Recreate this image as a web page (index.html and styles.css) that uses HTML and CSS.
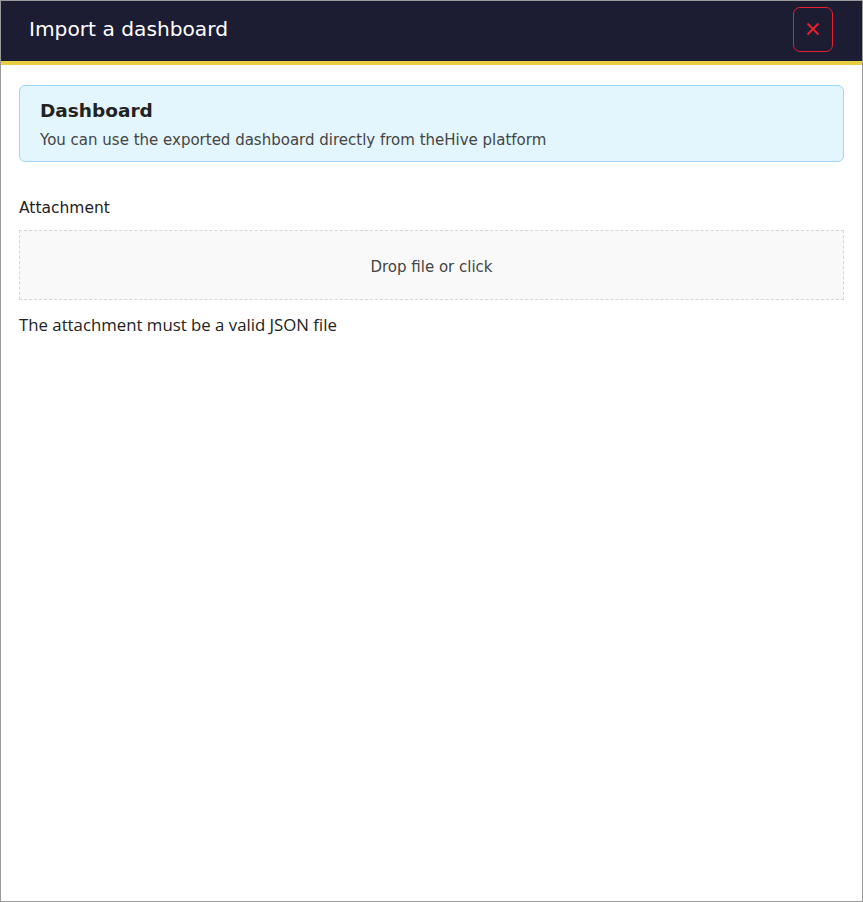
FILE: index.html
```html
<!DOCTYPE html>
<html>
<head>
<meta charset="utf-8">
<link rel="stylesheet" href="styles.css">
</head>
<body>
<div class="frame">
  <header class="header">
    <h1 class="title">Import a dashboard</h1>
    <button class="close" aria-label="Close">
      <svg width="14" height="14" viewBox="0 0 14 14"><path d="M1.5 1.5 L12.5 12.5 M12.5 1.5 L1.5 12.5" stroke="#e8202e" stroke-width="2" fill="none"/></svg>
    </button>
  </header>
  <main class="content">
    <div class="alert">
      <div class="alert-title">Dashboard</div>
      <div class="alert-text">You can use the exported dashboard directly from theHive platform</div>
    </div>
    <label class="label">Attachment</label>
    <div class="dropzone">Drop file or click</div>
    <p class="hint">The attachment must be a valid JSON file</p>
  </main>
</div>
</body>
</html>
```
FILE: styles.css
```css
* { box-sizing: border-box; }
html, body { margin: 0; padding: 0; background: #fff; }
.frame {
  width: 863px;
  height: 902px;
  border: 1px solid #9a9a9a;
  display: flex;
  flex-direction: column;
  font-family: "DejaVu Sans", sans-serif;
}
.header {
  height: 64px;
  background: #1c1c33;
  border-bottom: 4px solid #e9cf40;
  display: flex;
  align-items: center;
  justify-content: space-between;
  padding: 0 29px 0 28px;
}
.title {
  margin: 0;
  font-size: 20.2px;
  font-weight: normal;
  color: #fff;
  padding-bottom: 5px;
}
.close {
  width: 40px;
  height: 45px;
  border: 1px solid #e8202e;
  border-radius: 7px;
  background: transparent;
  display: flex;
  align-items: center;
  justify-content: center;
  padding: 0;
  margin-bottom: 4px;
}
.content {
  padding: 20px 18px;
}
.alert {
  background: #e3f5fd;
  border: 1px solid #9fd6f7;
  border-radius: 6px;
  padding: 13px 20px 12px;
  margin-bottom: 37px;
  height: 77px;
}
.alert-title {
  font-size: 18.5px;
  font-weight: bold;
  color: #222;
  line-height: 24px;
}
.alert-text {
  font-size: 15px;
  color: #444;
  margin-top: 7px;
  line-height: 20px;
}
.label {
  display: block;
  font-size: 15.5px;
  color: #222;
  line-height: 18px;
  margin-top: 1px;
  margin-bottom: 13px;
}
.dropzone {
  height: 70px;
  border: 1px dashed #d6d6d6;
  background: #f9f9f9;
  display: flex;
  align-items: center;
  justify-content: center;
  font-size: 15px;
  color: #444;
  padding-top: 4px;
}
.hint {
  font-family: "Open Sans", sans-serif;
  font-size: 16.8px;
  color: #222;
  margin: 13px 0 0;
}
```
